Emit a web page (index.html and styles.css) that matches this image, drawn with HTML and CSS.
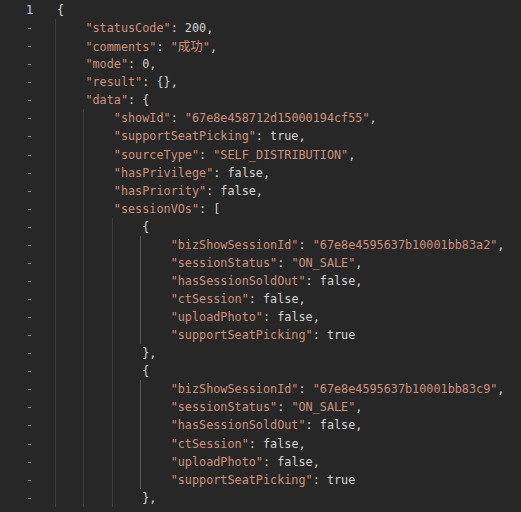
FILE: index.html
```html
<!DOCTYPE html>
<html>
<head>
<meta charset="utf-8">
<link rel="stylesheet" href="styles.css">
</head>
<body>
<div class="editor">
  <div class="row"><span class="ln first">1</span><span class="t"><span class="p">{</span></span></div>
  <div class="row"><span class="ln">-</span><span class="g"></span><span class="t"><span class="s">"statusCode"</span><span class="p">: 200,</span></span></div>
  <div class="row"><span class="ln">-</span><span class="g"></span><span class="t"><span class="s">"comments"</span><span class="p">: </span><span class="s">"<span class="cjk">成功</span>"</span><span class="p">,</span></span></div>
  <div class="row"><span class="ln">-</span><span class="g"></span><span class="t"><span class="s">"mode"</span><span class="p">: 0,</span></span></div>
  <div class="row"><span class="ln">-</span><span class="g"></span><span class="t"><span class="s">"result"</span><span class="p">: {},</span></span></div>
  <div class="row"><span class="ln">-</span><span class="g"></span><span class="t"><span class="s">"data"</span><span class="p">: {</span></span></div>
  <div class="row"><span class="ln">-</span><span class="g"></span><span class="g"></span><span class="t"><span class="s">"showId"</span><span class="p">: </span><span class="s">"67e8e458712d15000194cf55"</span><span class="p">,</span></span></div>
  <div class="row"><span class="ln">-</span><span class="g"></span><span class="g"></span><span class="t"><span class="s">"supportSeatPicking"</span><span class="p">: true,</span></span></div>
  <div class="row"><span class="ln">-</span><span class="g"></span><span class="g"></span><span class="t"><span class="s">"sourceType"</span><span class="p">: </span><span class="s">"SELF_DISTRIBUTION"</span><span class="p">,</span></span></div>
  <div class="row"><span class="ln">-</span><span class="g"></span><span class="g"></span><span class="t"><span class="s">"hasPrivilege"</span><span class="p">: false,</span></span></div>
  <div class="row"><span class="ln">-</span><span class="g"></span><span class="g"></span><span class="t"><span class="s">"hasPriority"</span><span class="p">: false,</span></span></div>
  <div class="row"><span class="ln">-</span><span class="g"></span><span class="g"></span><span class="t"><span class="s">"sessionVOs"</span><span class="p">: [</span></span></div>
  <div class="row"><span class="ln">-</span><span class="g"></span><span class="g"></span><span class="g"></span><span class="t"><span class="p">{</span></span></div>
  <div class="row"><span class="ln">-</span><span class="g"></span><span class="g"></span><span class="g"></span><span class="g act"></span><span class="t"><span class="s">"bizShowSessionId"</span><span class="p">: </span><span class="s">"67e8e4595637b10001bb83a2"</span><span class="p">,</span></span></div>
  <div class="row"><span class="ln">-</span><span class="g"></span><span class="g"></span><span class="g"></span><span class="g act"></span><span class="t"><span class="s">"sessionStatus"</span><span class="p">: </span><span class="s">"ON_SALE"</span><span class="p">,</span></span></div>
  <div class="row"><span class="ln">-</span><span class="g"></span><span class="g"></span><span class="g"></span><span class="g act"></span><span class="t"><span class="s">"hasSessionSoldOut"</span><span class="p">: false,</span></span></div>
  <div class="row"><span class="ln">-</span><span class="g"></span><span class="g"></span><span class="g"></span><span class="g act"></span><span class="t"><span class="s">"ctSession"</span><span class="p">: false,</span></span></div>
  <div class="row"><span class="ln">-</span><span class="g"></span><span class="g"></span><span class="g"></span><span class="g act"></span><span class="t"><span class="s">"uploadPhoto"</span><span class="p">: false,</span></span></div>
  <div class="row"><span class="ln">-</span><span class="g"></span><span class="g"></span><span class="g"></span><span class="g act"></span><span class="t"><span class="s">"supportSeatPicking"</span><span class="p">: true</span></span></div>
  <div class="row"><span class="ln">-</span><span class="g"></span><span class="g"></span><span class="g"></span><span class="t"><span class="p">},</span></span></div>
  <div class="row"><span class="ln">-</span><span class="g"></span><span class="g"></span><span class="g"></span><span class="t"><span class="p">{</span></span></div>
  <div class="row"><span class="ln">-</span><span class="g"></span><span class="g"></span><span class="g"></span><span class="g act"></span><span class="t"><span class="s">"bizShowSessionId"</span><span class="p">: </span><span class="s">"67e8e4595637b10001bb83c9"</span><span class="p">,</span></span></div>
  <div class="row"><span class="ln">-</span><span class="g"></span><span class="g"></span><span class="g"></span><span class="g act"></span><span class="t"><span class="s">"sessionStatus"</span><span class="p">: </span><span class="s">"ON_SALE"</span><span class="p">,</span></span></div>
  <div class="row"><span class="ln">-</span><span class="g"></span><span class="g"></span><span class="g"></span><span class="g act"></span><span class="t"><span class="s">"hasSessionSoldOut"</span><span class="p">: false,</span></span></div>
  <div class="row"><span class="ln">-</span><span class="g"></span><span class="g"></span><span class="g"></span><span class="g act"></span><span class="t"><span class="s">"ctSession"</span><span class="p">: false,</span></span></div>
  <div class="row"><span class="ln">-</span><span class="g"></span><span class="g"></span><span class="g"></span><span class="g act"></span><span class="t"><span class="s">"uploadPhoto"</span><span class="p">: false,</span></span></div>
  <div class="row"><span class="ln">-</span><span class="g"></span><span class="g"></span><span class="g"></span><span class="g act"></span><span class="t"><span class="s">"supportSeatPicking"</span><span class="p">: true</span></span></div>
  <div class="row"><span class="ln">-</span><span class="g"></span><span class="g"></span><span class="g"></span><span class="t"><span class="p">},</span></span></div>
</div>
</body>
</html>
```

FILE: styles.css
```css
html, body {
  margin: 0;
  padding: 0;
  background: #272727;
  height: 100%;
  overflow: hidden;
}
.editor {
  padding-top: 1px;
  font-family: "DejaVu Sans Mono", "Liberation Mono", "Noto Sans CJK SC", monospace;
  font-size: 11.8px;
  color: #d4d4d4;
}
.row {
  display: flex;
  height: 18.07px;
  line-height: 18.07px;
  white-space: pre;
}
.ln {
  flex: none;
  width: 55px;
  box-sizing: border-box;
  padding-right: 22px;
  text-align: right;
  color: #7d86b8;
}
.ln.first {
  color: #c6cdea;
}
.g {
  flex: none;
  width: 4ch;
  background: linear-gradient(#3d3d3d, #3d3d3d) no-repeat 0 0 / 1px 100%;
}
.g.act {
  background-image: linear-gradient(#5c5c5c, #5c5c5c);
}
.t {
  margin-left: 2px;
}
.s {
  color: #ce9178;
}
.p {
  color: #d4d4d4;
}
.cjk {
  font-family: "Noto Sans CJK SC", sans-serif;
  font-size: 12.5px;
}
```
